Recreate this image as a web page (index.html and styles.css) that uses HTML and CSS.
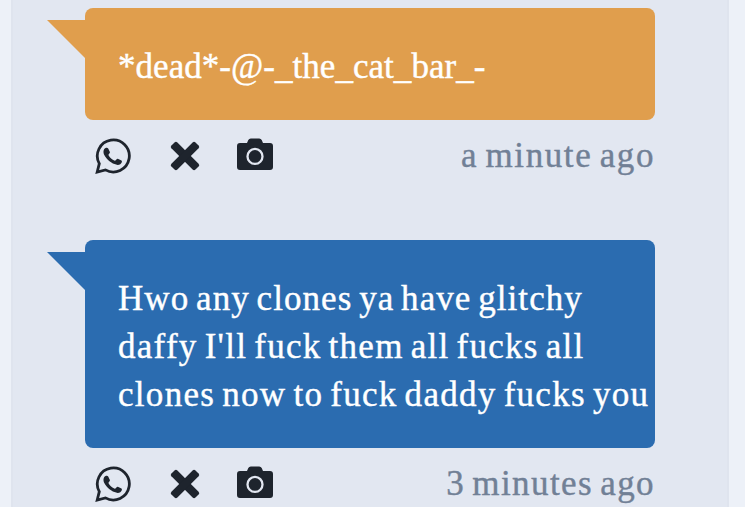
FILE: index.html
```
<!DOCTYPE html>
<html>
<head lang="en">
    <meta charset="UTF-8">
    <title>Messages</title>
    <link rel="stylesheet" href="styles.css">
</head>
<body>
<svg class="symbols">
    <symbol id="whatsapp" viewBox="0 0 36 36">
        <path d="M2.2 34 4.3 25.7A16 16 0 1 1 10.4 31.9Z" fill="none" stroke="currentColor" stroke-width="2.8"/>
        <path d="M9.4 10.8C10.4 9.5 12.6 9.2 13.2 10.4L14.9 14.1C15.3 15.1 13.6 16.2 13.4 16.9C14.9 19.7 17 21.5 19.8 22.7C20.7 22.6 21.8 20.5 22.8 20.7L26.5 22.5C27.5 23.1 26.7 25.3 25.3 26.2C22.8 27.8 19.1 26.4 16.4 24.6C13.4 22.7 10.4 19.5 9 16.5C8.2 14.7 8.3 12.2 9.4 10.8Z" fill="currentColor"/>
    </symbol>
    <symbol id="cross" viewBox="0 0 36 36">
        <g transform="translate(19 18) rotate(45)" fill="currentColor">
            <rect x="-17" y="-4.2" width="34" height="8.4" rx="2"/>
            <rect x="-4.2" y="-17" width="8.4" height="34" rx="2"/>
        </g>
    </symbol>
    <symbol id="camera" viewBox="0 0 36 36">
        <path d="M3 5H10L11.3 2Q12 .4 13.8 .4H22.2Q24 .4 24.7 2L26 5H33Q36 5 36 8V29Q36 32 33 32H3Q0 32 0 29V8Q0 5 3 5Z" fill="currentColor"/>
        <circle cx="18" cy="18.4" r="7.5" fill="none" stroke="#e2e7f1" stroke-width="2.3"/>
    </symbol>
</svg>
<div id="container">
    <div class="message orange">
        <div class="bubble">
            <p class="line name">*dead*-@-_the_cat_bar_-</p>
        </div>
        <div class="info">
            <svg class="icon"><use href="#whatsapp"/></svg>
            <svg class="icon"><use href="#cross"/></svg>
            <svg class="icon"><use href="#camera"/></svg>
            <span class="time minute">a minute ago</span>
        </div>
    </div>
    <div class="message blue">
        <div class="bubble">
            <p class="line first">Hwo any clones ya have glitchy</p>
            <p class="line second">daffy I'll fuck them all fucks all</p>
            <p class="line third">clones now to fuck daddy fucks you</p>
        </div>
        <div class="info">
            <svg class="icon"><use href="#whatsapp"/></svg>
            <svg class="icon"><use href="#cross"/></svg>
            <svg class="icon"><use href="#camera"/></svg>
            <span class="time minutes">3 minutes ago</span>
        </div>
    </div>
</div>
</body>
</html>
```
FILE: styles.css
```
* {
    margin: 0;
    padding: 0;
    box-sizing: border-box;
}

html {
    background: #fff;
}

body {
    width: 745px;
    height: 507px;
    overflow: hidden;
    background: #edf1f8;
    font-family: "Liberation Serif", serif;
    font-size: 35px;
    line-height: 48px;
    word-spacing: -3px;
    -webkit-text-stroke: 0.4px;
}

.symbols {
    display: none;
}

#container {
    width: 718px;
    height: 507px;
    margin-left: 11px;
    padding: 8px 72px 0 72px;
    background: #e2e7f1;
    border: 2px solid #dfe4ee;
    border-width: 0 2px;
}

.message {
    height: 232px;
}

.bubble {
    position: relative;
    width: 570px;
    padding: 35px 32px 29px 33px;
    border-radius: 8px;
    color: #fff;
    white-space: nowrap;
}

.bubble:before {
    content: "";
    position: absolute;
    left: -38px;
    top: 12px;
    width: 39px;
    height: 39px;
    clip-path: polygon(0 0, 100% 0, 100% 100%);
}

.orange .bubble, .orange .bubble:before {
    background: #e09e4d;
}

.blue .bubble, .blue .bubble:before {
    background: #2b6cb0;
}

.info {
    display: flex;
    width: 570px;
    height: 72px;
    padding: 18px 0 0 10px;
    color: #1e242d;
}

.icon {
    width: 36px;
    height: 36px;
    margin-right: 35px;
}

.time {
    margin: -6px 0 0 auto;
    color: #718096;
    white-space: nowrap;
}

.name {
    letter-spacing: 0.04px;
}

.first {
    letter-spacing: 1.06px;
}

.second {
    letter-spacing: 1.28px;
}

.third {
    letter-spacing: 1.29px;
}

.minute {
    letter-spacing: 1.6px;
}

.minutes {
    letter-spacing: 1.42px;
}
```
